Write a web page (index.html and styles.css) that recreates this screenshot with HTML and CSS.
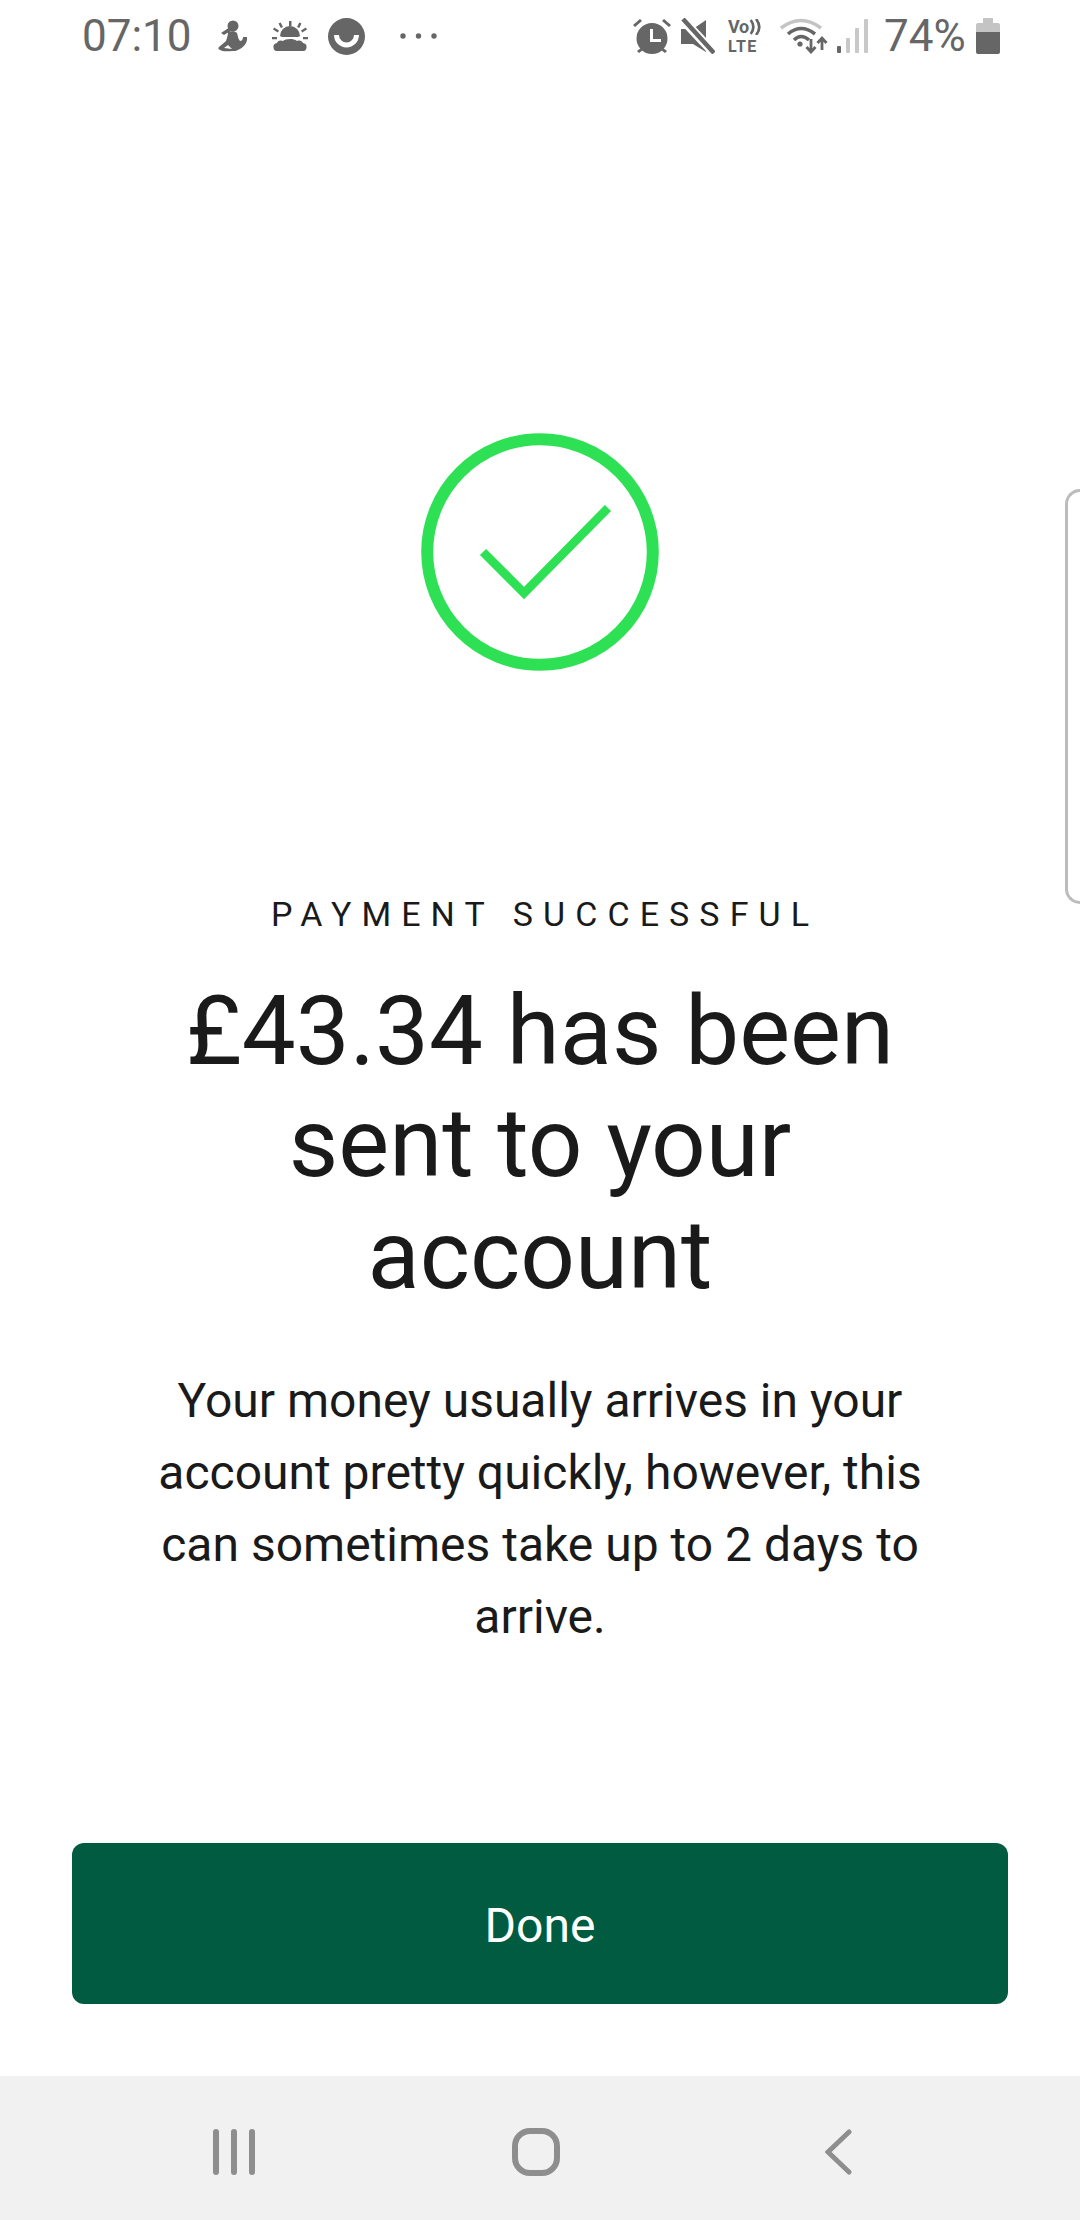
FILE: index.html
```html
<!DOCTYPE html>
<html lang="en">
<head>
<meta charset="utf-8">
<title>Payment successful</title>
<link rel="stylesheet" href="styles.css">
</head>
<body>
<div class="screen">
  <header class="status">
    <div class="status-left">
      <span class="time">07:10</span>
      <svg class="si i-figure" viewBox="0 0 30 34"><circle cx="15" cy="7" r="5.500"/><path d="M3 14l9-6 2 3-8 5zM10 13c3-1 7-1 9 1 1 3 1 6 3 8 2 0 3-2 3-4h4c1 6-4 11-9 13-2 1-3 1-5 1-4 0-10 1-13-1-2-1-2-2-1-3l7-6c1-3 2-6 2-9zM10 26l-4 3 8 1z"/></svg>
      <svg class="si i-sun" viewBox="0 0 36 30"><path d="M8 15a10 10 0 0 1 20 0l-2 1H10zM17 0h2.500v5H17zM6.500 2.500l2.200-1 2.300 4.500-2.200 1zM29.500 2.500l-2.200-1-2.300 4.500 2.200 1zM1 8.500l1.200-2 4.800 3-1.200 2zM35 8.500l-1.200-2-4.800 3 1.200 2zM0 16h5v2.200H0zM31 16h5v2.200h-5z"/><path d="M6 30a4 4 0 0 1-1-8c1-3 4-3 6-2 2-2 10-3 14 0 3-1 5 0 6 2a4 4 0 0 1-1 8z"/></svg>
      <svg class="si i-face" viewBox="0 0 37 37"><path fill-rule="evenodd" d="M18.500 0a18.500 18.500 0 1 0 0 37 18.500 18.500 0 0 0 0-37zM6 17h5a7.500 7.500 0 0 0 15 0h5a12.500 12.500 0 0 1-25 0z"/></svg>
      <svg class="si i-dots" viewBox="0 0 37 6"><circle cx="3" cy="3" r="2.700"/><circle cx="18.500" cy="3" r="2.700"/><circle cx="34" cy="3" r="2.700"/></svg>
    </div>
    <div class="status-right">
      <svg class="si i-alarm" viewBox="0 0 38 36"><path fill-rule="evenodd" d="M19 5a15.500 15.500 0 1 0 0 31 15.500 15.500 0 0 0 0-31zM17 11h3v10h8v3H17z"/><path d="M0 7l7-6 2 2-7 6zM38 7l-7-6-2 2 7 6zM4 33l4-3 2 2-4 3zM34 33l-4-3-2 2 4 3z"/></svg>
      <svg class="si i-mute" viewBox="0 0 34 36"><path d="M0 11h12L25 2v32l-13-8H0z"/><path class="gap" d="M1 1l32 34"/><path class="bar" d="M2 1l31 34"/></svg>
      <div class="volte"><span class="vo">Vo<svg class="vo-arc" viewBox="0 0 10 15"><path d="M1 1c3 4 3 9 0 13M6 0c4 5 4 10 0 15"/></svg></span><span class="lte">LTE</span></div>
      <svg class="si i-wifi" viewBox="0 0 48 36"><path class="light" d="M1 10Q21-5 41 10"/><path class="dark" d="M8 16Q21 5 35 16M14 22Q21 15 29 22"/><circle cx="20" cy="26" r="2.600" class="dot"/><path class="arrow" d="M31 21v13M26.500 29l4.500 5 4.500-5M42 32V20M37.500 25l4.500-5 4.500 5"/></svg>
      <svg class="si i-signal" viewBox="0 0 32 34"><rect x="0" y="27" width="4" height="7" rx="1" class="on"/><rect x="9" y="19" width="4" height="15" rx="1" class="off"/><rect x="18" y="9" width="4" height="25" rx="1" class="off"/><rect x="27" y="0" width="4" height="34" rx="1" class="off"/></svg>
      <span class="pct">74%</span>
      <svg class="si i-batt" viewBox="0 0 24 36"><path class="off" d="M7 0h10v5h5a2 2 0 0 1 2 2v7H0V7a2 2 0 0 1 2-2h5z"/><path d="M0 14h24v20a2 2 0 0 1-2 2H2a2 2 0 0 1-2-2z"/></svg>
    </div>
  </header>

  <div class="edge-handle"></div>

  <main class="content">
    <svg class="check" viewBox="0 0 238 238"><circle cx="119" cy="119" r="112.800"/><path d="M62 119l41 41 84-85"/></svg>
    <p class="eyebrow">PAYMENT SUCCESSFUL</p>
    <h1 class="headline">£43.34 has been<br>sent to your<br>account</h1>
    <p class="body-copy">Your money usually arrives in your<br>account pretty quickly, however, this<br>can sometimes take up to 2 days to<br>arrive.</p>
  </main>

  <div class="actions"><button class="done">Done</button></div>

  <nav class="navbar">
    <svg class="nav-recents" viewBox="0 0 42 46"><path d="M3 3v40M21 3v40M39 3v40"/></svg>
    <svg class="nav-home" viewBox="0 0 48 48"><rect x="3" y="3" width="42" height="42" rx="15"/></svg>
    <svg class="nav-back" viewBox="0 0 27 46"><path d="M24 3L3 23l21 20"/></svg>
  </nav>
</div>
</body>
</html>
```
FILE: styles.css
```css
* { box-sizing: border-box; }
html, body { margin: 0; padding: 0; background: #fff; }
.screen {
  position: relative;
  width: 1080px;
  height: 2220px;
  display: flex;
  flex-direction: column;
  overflow: hidden;
  background: #fff;
  font-family: Roboto, "Noto Sans", sans-serif;
  color: #1a1a1a;
}

/* status bar */
.status {
  height: 72px;
  padding: 0 80px 0 82px;
  display: flex;
  justify-content: space-between;
  align-items: center;
  color: #666;
}
.status-left, .status-right { display: flex; align-items: center; }
.si { display: block; fill: #666; }
.time { font-size: 44px; width: 136px; line-height: 72px; }
.i-figure { width: 30px; height: 34px; margin-right: 24px; }
.i-sun { width: 36px; height: 30px; margin-right: 20px; }
.i-face { width: 37px; height: 37px; margin-right: 35px; }
.i-dots { width: 37px; height: 6px; }
.i-alarm { width: 38px; height: 36px; margin-right: 10px; }
.i-mute { width: 34px; height: 36px; margin-right: 13px; }
.i-mute .gap { stroke: #fff; stroke-width: 9; fill: none; }
.i-mute .bar { stroke: #666; stroke-width: 4.500; fill: none; }
.volte {
  width: 38px;
  margin-right: 14px;
  display: flex;
  flex-direction: column;
  font-weight: 700;
}
.vo { display: flex; align-items: center; font-size: 18px; line-height: 21px; height: 21px; letter-spacing: -0.3px; }
.vo-arc { width: 12px; height: 16px; fill: none; stroke: #666; stroke-width: 2.500; }
.lte { font-size: 16px; line-height: 19px; height: 19px; letter-spacing: 1.200px; }
.i-wifi { width: 48px; height: 36px; margin-right: 9px; fill: none; }
.i-wifi .light { stroke: #c4c4c4; stroke-width: 3.500; fill: none; }
.i-wifi .dark { stroke: #666; stroke-width: 3.500; fill: none; }
.i-wifi .dot { fill: #666; }
.i-wifi .arrow { stroke: #666; stroke-width: 2.800; fill: none; }
.i-signal { width: 32px; height: 34px; margin-right: 15px; }
.i-signal .on { fill: #666; }
.i-signal .off { fill: #c8c8c8; }
.pct { font-size: 44px; line-height: 72px; width: 92px; }
.i-batt { width: 24px; height: 36px; }
.i-batt .off { fill: #c4c4c4; }

/* edge panel handle */
.edge-handle {
  position: absolute;
  top: 489px;
  right: 0;
  width: 15px;
  height: 415px;
  border: 3px solid #bcbcbc;
  border-right: 0;
  border-radius: 20px 0 0 20px;
}

/* main */
.content {
  flex: 1;
  display: flex;
  flex-direction: column;
  align-items: center;
  text-align: center;
  padding-top: 361px;
}
.check { width: 238px; height: 238px; display: block; fill: none; stroke: #2ee053; }
.check circle { stroke-width: 12px; }
.check path { stroke-width: 8.700px; }
.eyebrow {
  margin: 223px 0 0;
  font-size: 34px;
  line-height: 40px;
  letter-spacing: 10.100px;
  text-indent: 10px;
}
.headline {
  margin: 41px 0 0;
  font-size: 96px;
  line-height: 112px;
  font-weight: 400;
  color: #1a1a1a;
}
.body-copy {
  margin: 54px 0 0;
  font-size: 48px;
  line-height: 72px;
  color: #1a1a1a;
}

/* button */
.actions { padding: 0 72px 72px; }
.done {
  display: block;
  width: 936px;
  height: 161px;
  padding: 4px 0 0;
  border: 0;
  border-radius: 12px;
  background: #005b41;
  color: #fff;
  font-family: inherit;
  font-size: 48px;
}

/* system navigation */
.navbar {
  height: 144px;
  background: #f1f1f1;
  display: flex;
  align-items: center;
  padding: 7px 0 0 213px;
}
.navbar svg { display: block; fill: none; stroke: #8e8e8e; stroke-linecap: round; }
.nav-recents { width: 42px; height: 46px; stroke-width: 6px; margin-right: 257px; }
.nav-home { width: 48px; height: 48px; stroke-width: 6px; margin-right: 265px; }
.nav-back { width: 27px; height: 46px; stroke-width: 5px; }
```
